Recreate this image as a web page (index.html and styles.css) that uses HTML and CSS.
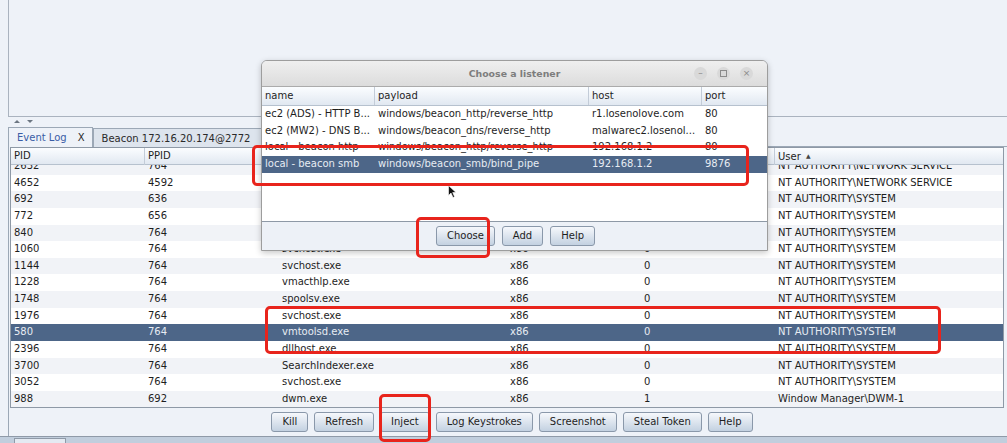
FILE: index.html
```html
<!DOCTYPE html>
<html>
<head>
<meta charset="utf-8">
<link rel="stylesheet" href="styles.css">
</head>
<body>
<div class="top-pane"></div>
<div class="divider"><span class="arr up"></span><span class="arr down"></span></div>
<div class="tabs">
  <div class="tab active"><span>Event Log</span><span class="x">X</span></div>
  <div class="tab"><span>Beacon 172.16.20.174@2772</span><span class="x">X</span></div>
</div>
<div class="panel">
  <div class="table">
    <div class="thead">
      <div class="th">PID</div><div class="th">PPID</div><div class="th">Name</div><div class="th">Arch</div><div class="th">Session</div><div class="th">User <span class="sort">▲</span></div>
    </div>
    <div class="tbody">
      <div class="rows">
        <div class="tr"><div class="td">2632</div><div class="td">764</div><div class="td">svchost.exe</div><div class="td">x86</div><div class="td">0</div><div class="td">NT AUTHORITY\NETWORK SERVICE</div></div>
        <div class="tr"><div class="td">4652</div><div class="td">4592</div><div class="td">conhost.exe</div><div class="td">x86</div><div class="td">0</div><div class="td">NT AUTHORITY\NETWORK SERVICE</div></div>
        <div class="tr"><div class="td">692</div><div class="td">636</div><div class="td">winlogon.exe</div><div class="td">x86</div><div class="td">1</div><div class="td">NT AUTHORITY\SYSTEM</div></div>
        <div class="tr"><div class="td">772</div><div class="td">656</div><div class="td">lsass.exe</div><div class="td">x86</div><div class="td">0</div><div class="td">NT AUTHORITY\SYSTEM</div></div>
        <div class="tr"><div class="td">840</div><div class="td">764</div><div class="td">svchost.exe</div><div class="td">x86</div><div class="td">0</div><div class="td">NT AUTHORITY\SYSTEM</div></div>
        <div class="tr"><div class="td">1060</div><div class="td">764</div><div class="td">svchost.exe</div><div class="td">x86</div><div class="td">0</div><div class="td">NT AUTHORITY\SYSTEM</div></div>
        <div class="tr"><div class="td">1144</div><div class="td">764</div><div class="td">svchost.exe</div><div class="td">x86</div><div class="td">0</div><div class="td">NT AUTHORITY\SYSTEM</div></div>
        <div class="tr"><div class="td">1228</div><div class="td">764</div><div class="td">vmacthlp.exe</div><div class="td">x86</div><div class="td">0</div><div class="td">NT AUTHORITY\SYSTEM</div></div>
        <div class="tr"><div class="td">1748</div><div class="td">764</div><div class="td">spoolsv.exe</div><div class="td">x86</div><div class="td">0</div><div class="td">NT AUTHORITY\SYSTEM</div></div>
        <div class="tr"><div class="td">1976</div><div class="td">764</div><div class="td">svchost.exe</div><div class="td">x86</div><div class="td">0</div><div class="td">NT AUTHORITY\SYSTEM</div></div>
        <div class="tr sel"><div class="td">580</div><div class="td">764</div><div class="td">vmtoolsd.exe</div><div class="td">x86</div><div class="td">0</div><div class="td">NT AUTHORITY\SYSTEM</div></div>
        <div class="tr"><div class="td">2396</div><div class="td">764</div><div class="td">dllhost.exe</div><div class="td">x86</div><div class="td">0</div><div class="td">NT AUTHORITY\SYSTEM</div></div>
        <div class="tr"><div class="td">3700</div><div class="td">764</div><div class="td">SearchIndexer.exe</div><div class="td">x86</div><div class="td">0</div><div class="td">NT AUTHORITY\SYSTEM</div></div>
        <div class="tr"><div class="td">3052</div><div class="td">764</div><div class="td">svchost.exe</div><div class="td">x86</div><div class="td">0</div><div class="td">NT AUTHORITY\SYSTEM</div></div>
        <div class="tr"><div class="td">988</div><div class="td">692</div><div class="td">dwm.exe</div><div class="td">x86</div><div class="td">1</div><div class="td">Window Manager\DWM-1</div></div>
      </div>
    </div>
  </div>
  <div class="buttons">
    <button class="btn">Kill</button>
    <button class="btn">Refresh</button>
    <button class="btn">Inject</button>
    <button class="btn">Log Keystrokes</button>
    <button class="btn">Screenshot</button>
    <button class="btn">Steal Token</button>
    <button class="btn">Help</button>
  </div>
</div>
<div class="statusbar"><span class="stab"></span></div>

<div class="dialog">
  <div class="dtitle">
    <span></span>
    <span class="dtitle-text">Choose a listener</span>
    <span class="wctl"><span class="wbtn">–</span><span class="wbtn sq"></span><span class="wbtn">×</span></span>
  </div>
  <div class="dtable">
    <div class="dhead"><div class="th">name</div><div class="th">payload</div><div class="th">host</div><div class="th">port</div></div>
    <div class="drow"><div class="td">ec2 (ADS) - HTTP B...</div><div class="td">windows/beacon_http/reverse_http</div><div class="td">r1.losenolove.com</div><div class="td">80</div></div>
    <div class="drow"><div class="td">ec2 (MW2) - DNS B...</div><div class="td">windows/beacon_dns/reverse_http</div><div class="td">malwarec2.losenol...</div><div class="td">80</div></div>
    <div class="drow"><div class="td">local - beacon http</div><div class="td">windows/beacon_http/reverse_http</div><div class="td">192.168.1.2</div><div class="td">80</div></div>
    <div class="drow sel"><div class="td">local - beacon smb</div><div class="td">windows/beacon_smb/bind_pipe</div><div class="td">192.168.1.2</div><div class="td">9876</div></div>
  </div>
  <div class="dbuttons">
    <button class="btn">Choose</button>
    <button class="btn">Add</button>
    <button class="btn">Help</button>
  </div>
</div>

<svg class="cursor" width="9" height="13" viewBox="0 0 9 13"><path d="M0.5 0.5 L0.5 10.5 L3 8 L5 12.5 L6.6 11.8 L4.7 7.5 L8 7.5 Z" fill="#111" stroke="#fff" stroke-width="0.6"/></svg>

<div class="mark m1"></div>
<div class="mark m2"></div>
<div class="mark m3"></div>
<div class="mark m4"></div>
</body>
</html>
```

FILE: styles.css
```css
* { box-sizing: border-box; margin: 0; padding: 0; }
body {
  width: 1007px; height: 443px; overflow: hidden; position: relative;
  background: #eef2f8;
  font-family: "DejaVu Sans", sans-serif; font-size: 10px; color: #1e1e1e;
}
.top-pane {
  height: 117px; margin-left: 8px;
  border-left: 1px solid #aab3bf; border-bottom: 1px solid #aab3bf;
  background: #eef2f8;
}
.divider { height: 10px; display: flex; gap: 7px; padding: 3px 0 0 14px; }
.arr { width: 0; height: 0; border-left: 3px solid transparent; border-right: 3px solid transparent; }
.arr.up { border-bottom: 3px solid #6c7682; }
.arr.down { border-top: 3px solid #6c7682; }

.tabs {
  height: 20px; margin-left: 8px; display: flex; align-items: flex-end;
  border-bottom: 1px solid #9ca8b6;
}
.tab {
  height: 19px; display: flex; align-items: center; gap: 11px; white-space: nowrap;
  padding: 0 7px 0 8px; border: 1px solid #9ca8b6; border-bottom: none;
  background: #dde4ed; color: #2a2a2a; margin-bottom: -1px;
}
.tab.active { background: #eef2f8; color: #3a5da6; height: 20px; }
.tab.active .x { color: #2a2a2a; }

.panel { margin-left: 8px; border-left: 1px solid #9ca8b6; }
.table {
  margin: 0 3px 0 1px; height: 261px; border: 1px solid #8e99a6; background: #fff;
  display: flex; flex-direction: column;
}
.thead, .tr { display: grid; grid-template-columns: 134px 134px 228px 134px 134px 1fr; }
.thead {
  flex: none; height: 17px; background: linear-gradient(#fbfdff, #e1e8f1);
  border-bottom: 1px solid #b6c1ce;
}
.th { padding-left: 3px; border-right: 1px solid #c3ccd8; line-height: 16px; white-space: nowrap; }
.th:last-child { border-right: none; }
.sort { font-size: 6px; vertical-align: 2px; margin-left: 2px; color: #444; }
.tbody { flex: 1; overflow: hidden; }
.rows { margin-top: -7px; }
.tr { height: 16.65px; line-height: 16.65px; }
.tr:nth-child(odd) { background: #f1f3f7; }
.tr.sel { background: #4d6688; color: #e7ecf3; }
.td { padding-left: 3px; white-space: nowrap; overflow: hidden; }

.buttons {
  height: 28px; display: flex; justify-content: center; gap: 6px;
  padding: 4px 0 0 8px;
}
.btn {
  height: 20px; padding: 0 10px; border: 1px solid #8a98aa; border-radius: 3px;
  background: linear-gradient(#f6f8fc, #c3d1e1);
  font-family: "DejaVu Sans", sans-serif; font-size: 10px; color: #1e1e1e; line-height: 18px;
}
.statusbar {
  height: 8px; border-top: 1px solid #8f9aa8; background: #c1cedd; padding-left: 14px;
}
.stab { display: block; width: 52px; height: 8px; margin-top: 1px; background: #e4eaf2; border: 1px solid #8f9aa8; border-bottom: none; }

.dialog {
  position: absolute; z-index: 5; left: 261px; top: 60px; width: 507px; height: 191px;
  border: 1px solid #9d9d9d; border-radius: 6px 6px 0 0; overflow: hidden;
  background: #edf1f7; box-shadow: 0 2px 6px rgba(0,0,0,0.22);
  display: flex; flex-direction: column;
}
.dtitle {
  flex: none; height: 26px; display: grid; grid-template-columns: 1fr auto 1fr; align-items: center;
  background: linear-gradient(#efefef, #dcdcdc); border-bottom: 1px solid #ababab;
}
.dtitle-text { font-weight: bold; font-size: 9.4px; color: #7d7d7d; }
.wctl { justify-self: end; display: flex; gap: 10px; margin-right: 14px; }
.wbtn {
  width: 13px; height: 13px; border-radius: 50%; background: #d9d9d9;
  display: flex; align-items: center; justify-content: center; font-size: 9px; color: #8a8a8a; line-height: 1;
}
.wbtn.sq::before { content: ""; width: 5px; height: 5px; border: 1px solid #8a8a8a; }
.dtable { flex: none; height: 135px; background: #fff; border-bottom: 1px solid #8e99a6; }
.dhead, .drow { display: grid; grid-template-columns: 113px 214px 113px 1fr; }
.dhead { height: 19px; background: linear-gradient(#fbfdff, #e1e8f1); border-bottom: 1px solid #b6c1ce; }
.dhead .th { line-height: 18px; }
.drow { height: 16.7px; line-height: 16.7px; }
.drow.sel { background: #4d6688; color: #e7ecf3; }
.dbuttons { flex: 1; display: flex; justify-content: center; align-items: center; gap: 7px; padding-left: 2px; }

.cursor { position: absolute; z-index: 6; left: 448px; top: 185px; }
.mark { position: absolute; z-index: 7; border: 3px solid #e8241c; border-radius: 5px; }
.m1 { left: 252px; top: 145px; width: 497px; height: 41px; }
.m2 { left: 416px; top: 217px; width: 74px; height: 41px; }
.m3 { left: 265px; top: 306px; width: 676px; height: 48px; }
.m4 { left: 379px; top: 394px; width: 52px; height: 48px; }
```
